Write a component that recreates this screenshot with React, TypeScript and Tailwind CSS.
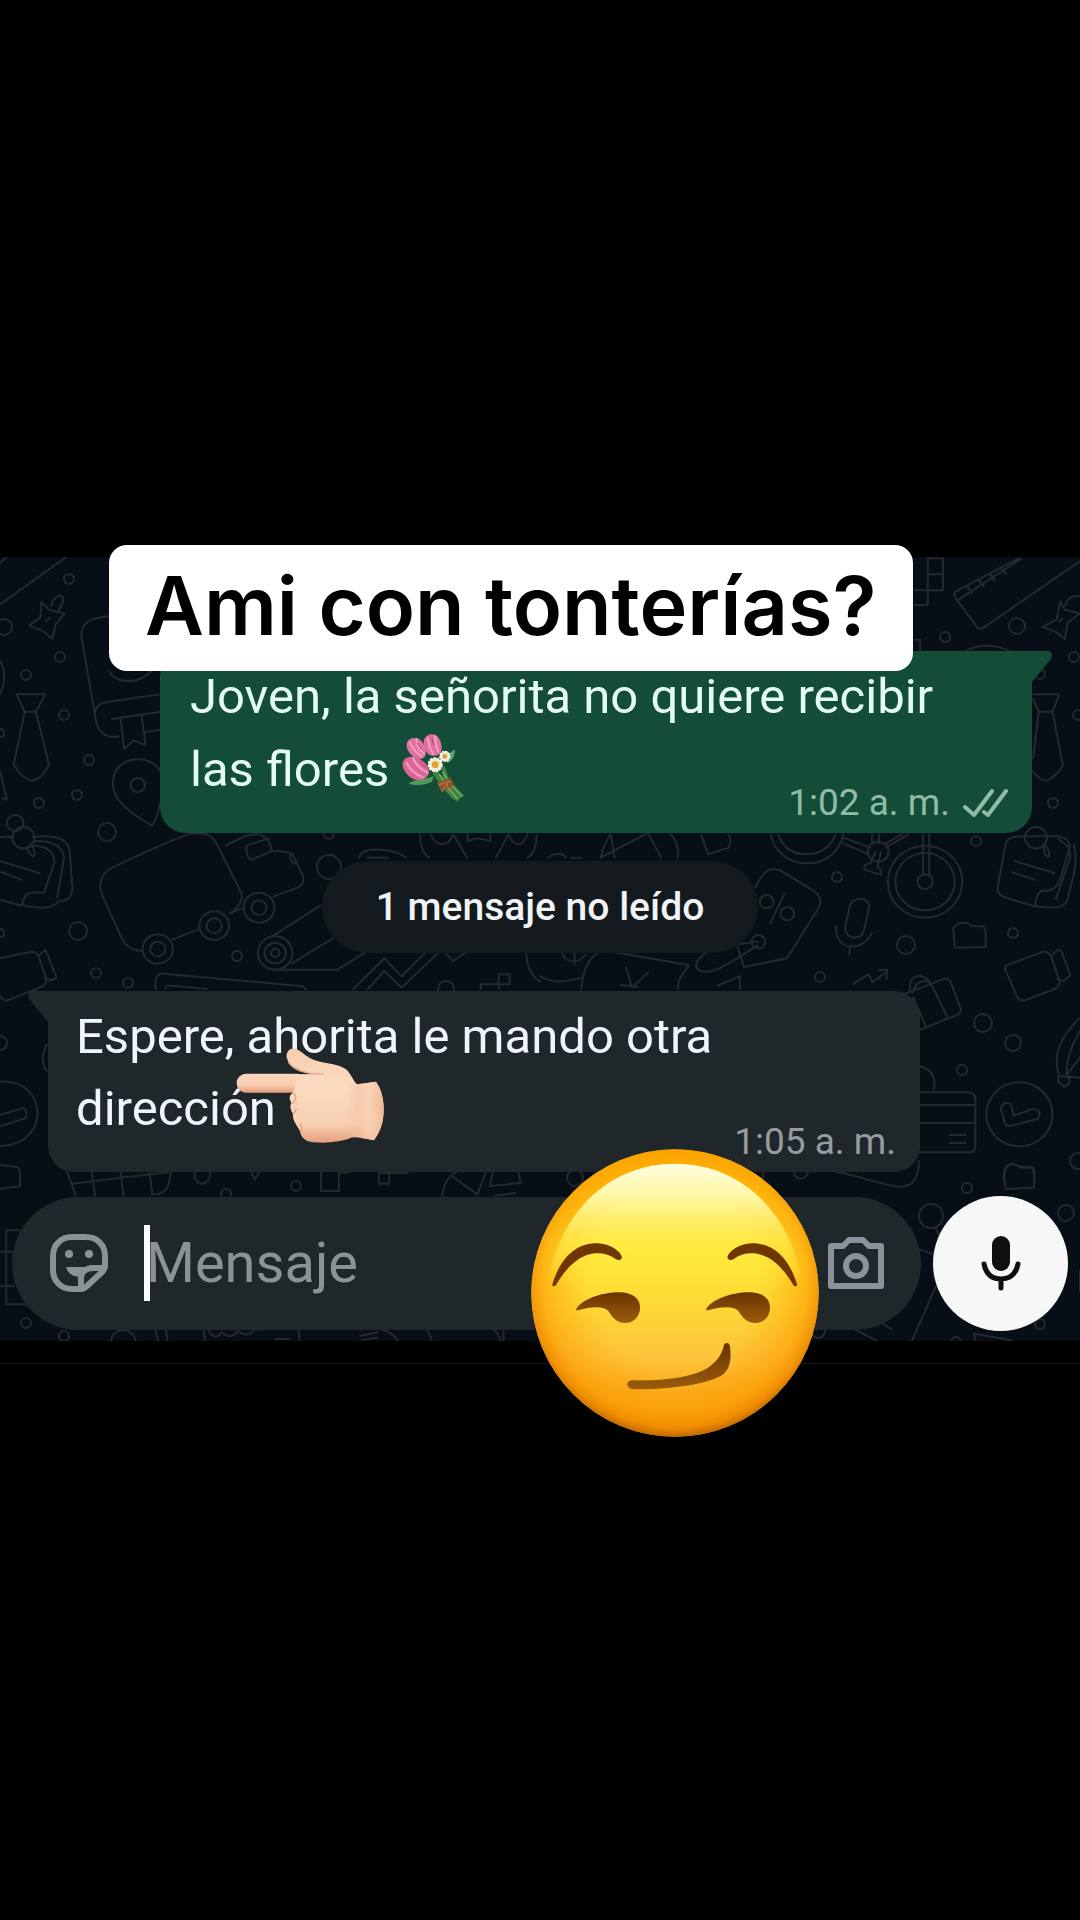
import React from 'react';

interface Dot {
    x: number;
    y: number;
    r: number;
}

// Small loose circles scattered over the wallpaper
const DOTS: Dot[] = [
    { x: 69, y: 578, r: 5 }, { x: 60, y: 656, r: 5 }, { x: 26, y: 674, r: 5 }, { x: 4, y: 626, r: 8 },
    { x: 64, y: 714, r: 5 }, { x: 89, y: 759, r: 5 }, { x: 77, y: 794, r: 5 }, { x: 39, y: 802, r: 5 },
    { x: 107, y: 831, r: 9 }, { x: 0, y: 732, r: 4 }, { x: 329, y: 833, r: 5 }, { x: 329, y: 866, r: 12 },
    { x: 78, y: 930, r: 9 }, { x: 237, y: 955, r: 5 }, { x: 96, y: 972, r: 5 }, { x: 128, y: 982, r: 5 },
    { x: 0, y: 932, r: 4 }, { x: 0, y: 1042, r: 7 }, { x: 446, y: 988, r: 8 }, { x: 945, y: 636, r: 5 },
    { x: 1017, y: 625, r: 8 }, { x: 1074, y: 656, r: 5 }, { x: 1078, y: 714, r: 5 }, { x: 1053, y: 802, r: 5 },
    { x: 1040, y: 673, r: 5 }, { x: 976, y: 840, r: 5 }, { x: 837, y: 876, r: 5 }, { x: 906, y: 944, r: 9 },
    { x: 1013, y: 932, r: 5 }, { x: 820, y: 976, r: 5 }, { x: 983, y: 1022, r: 9 }, { x: 1013, y: 1042, r: 8 },
    { x: 962, y: 1069, r: 5 }, { x: 967, y: 1187, r: 5 }, { x: 931, y: 1215, r: 12 }, { x: 1066, y: 1212, r: 8 },
    { x: 1040, y: 1323, r: 5 }, { x: 296, y: 1185, r: 5 }, { x: 226, y: 1193, r: 5 }, { x: 26, y: 1322, r: 5 },
    { x: 64, y: 1335, r: 5 }, { x: 575, y: 1177, r: 8 }, { x: 818, y: 1330, r: 7 }, { x: 956, y: 1341, r: 5 },
    { x: 1078, y: 1160, r: 8 },
];

const Wallpaper: React.FC = () => (
    <svg
        className="absolute inset-x-0 top-0 h-[784px] w-full bg-[#080e16]"
        viewBox="0 556 1080 784"
        preserveAspectRatio="xMidYMin slice"
        fill="none"
        stroke="#24292f"
        strokeWidth="2"
        strokeLinecap="round"
        strokeLinejoin="round"
        aria-hidden="true"
    >
        {DOTS.map((dot) => (
            <circle key={`${dot.x}-${dot.y}`} cx={dot.x} cy={dot.y} r={dot.r} />
        ))}

        {/* top left: ruler, star, diary, tie, pin */}
        <g transform="translate(0 530) scale(.3444 .3333)" strokeWidth="6">
            <path d="M0 220 190 80M0 96l20-18" />
            <path d="M120 212l22 24 46 12-26 32-10 44-30-26-38-14 34-26zM150 224c0-16 18-34 28-30 10 8 4 26-8 44M134 270l10-8" />
            <path d="M316 256c-56 4-80 20-80 58l40 240c4 40 20 66 60 64l10-2M276 550c-2-24 14-34 40-38l150-22M326 564l140-22M350 562l10 92 28-26 34 14-10-86M418 604l50-8M316 420c20 40 90 40 124 0" />
            <path d="M48 490h84l-28 52H72zM72 542 40 700c10 22 30 44 52 50 22-6 40-24 50-50L104 542" />
            <path d="M466 720c-30-46-100-48-130 0-26 60 10 110 106 164 14-24 20-46 24-72" />
            <circle cx="400" cy="762" r="21" />
            <path d="M0 390c16 26 16 70 0 98M0 720l20 86-12-4" />
        </g>

        {/* top right: blocks, ruler, star, tie */}
        <g transform="translate(540 530) scale(.3444 .3333)" strokeWidth="6">
            <path d="M1088 178h82V82h-44v140h-38M1126 130h44M1088 326h16v36" />
            <path d="M1390 82 1206 182c-6 8-4 16 4 24l60 84c6 4 12 4 18 0l280-200M1216 206l180-122M1242 168l12 18M1276 148l12 18M1308 130l12 18M1340 110l12 18" />
            <path d="M1510 212l14 24 46 12M1510 212l-10 54-40 22 36 14 28 22 8-50 38-28M1526 224c0-16 18-34 40-28M1508 272l8-8" />
            <path d="M1236 362c30-24 90-24 130 0" />
            <path d="M1432 490h70c6 0 4 10 0 16l-14 36h-40l-16-38M1448 542l-16 140M1488 542l30 160c-10 20-28 40-50 48-18-6-28-16-38-30" />
        </g>

        {/* middle left: pouch, truck, bandage, laptop */}
        <g transform="translate(0 830) scale(.3444 .3333)" strokeWidth="6">
            <circle cx="68" cy="20" r="32" />
            <circle cx="44" cy="-24" r="24" />
            <path d="M0 20c20-6 30-4 38 0M96 18c50-6 100-2 106 40l8 110c0 30-10 40-40 44M100 30c50 0 80 10 86 50l-20 120M98 44c40 2 60 20 60 50l-30 90c-10 4-40-8-54 10-8 14-6 20-12 30L0 206M66 222c60 14 90 10 104-12M78 52c6 8 8 20 18 24 8-6 6-20-8-36M0 90l114 36M0 122l62 24" />
            <path d="M326 110c60-30 150-74 220-100 46-8 70 0 86 34l68 140c8 24-6 40-26 62M326 110c-36 20-40 50-30 80l54 124c14 34 34 44 60 46M500 326l74-30M668 246l40-16M656 44c40-20 60-36 90-34 30 4 36 20 44 50l-60 26c-14-8-20-34-10-44l62-20M790 60c40 2 60 0 64 20l26 56c2 20-2 26-16 34l-70 26M842 72c0 12 4 22 14 26" />
            <circle cx="458" cy="354" r="44" />
            <circle cx="458" cy="354" r="22" />
            <circle cx="622" cy="284" r="43" />
            <circle cx="622" cy="284" r="22" />
            <circle cx="752" cy="230" r="45" />
            <circle cx="752" cy="230" r="22" />
            <circle cx="799" cy="366" r="50" />
            <circle cx="799" cy="366" r="31" />
            <circle cx="799" cy="366" r="12" />
            <path d="M790 316l140-92M846 398l124-78M800 416h180l84-54" />
            <path d="M452 474c-4-36 4-50 26-46l400 38 10 8M480 474c0-10 6-12 20-10l100 10" />
            <path d="M1026 474l90-92 50 54 72-74M1068 474l48-54 50 50 110-108M1290 362l26 28 40-28M1396 474v-14h84v-30h-32v44M1528 362c0 40 12 70 40 90" />
            <path d="M1042 80c10-36 100-30 138 0M1066 80h60M1220 10c0 40 10 60 26 70M1250 10c20 40 50 40 66 0M1316 10l40 70M1358 4v26l30-8 36 8V4M1476 10c20 40 40 40 56 0M1476 10l-36 70M1558 10c0 40-10 60-26 70" />
            <path d="M0 382l90-20c14 0 20 6 24 20l20 60c2 14-2 20-14 26L22 508c-10 2-22-8-22-14M112 374l20-18 32 84-14 8-20-6" />
            <path d="M136 640c-16 30-16 60 0 80M0 752c140-10 150 190 0 194M0 852l66-20c10 0 14 20 8 30L0 886" />
        </g>

        {/* middle right: bicycle, price tag, microphone, gift, card, clock */}
        <g transform="translate(540 830) scale(.3444 .3333)" strokeWidth="6">
            <path d="M670 10c20 116 190 116 210 0M692 10c20 80 140 80 166 0M880 20l80 30M874 34l76 34M964 10v30M984 10v28M1070 10l-66 40M1050 10l-50 30M1112 10v122M1130 10v122" />
            <circle cx="982" cy="62" r="30" />
            <path d="M974 62l-14 34c-14 2-22 10-18 20l48 16c4-12-4-20-10-24l10-44" />
            <circle cx="1118" cy="152" r="108" />
            <circle cx="1118" cy="152" r="86" />
            <circle cx="1118" cy="152" r="22" />
            <path d="M626 170c12-30 30-56 52-56l20 4 100 64c16 14 22 30 10 50l-90 150-126 26-18-60M710 188l-42 90M632 332c-80 10-150 16-176 60-10 30 20 36 50 26 40-14 70-40 126-74" />
            <circle cx="658" cy="212" r="20" />
            <circle cx="718" cy="248" r="20" />
            <circle cx="634" cy="332" r="20" />
            <path d="M886 290l14-66c8-30 56-28 56 6l-16 70c-6 30-54 26-54-10zM860 284c-6 80 80 80 104 20M900 350l-2 20" />
            <path d="M910 458l44-28 12 24 42-34M984 418l24-2-2 28" />
            <path d="M1204 350l-4-58 18-16h24l12 10h32l8 14v48zM1352 404l110-42c14 0 20 6 24 20l22 66c2 14-2 20-14 26l-86 34c-12 2-20-4-24-14l-34-80zM1484 374l20-18c6 0 8 2 10 6l26 70-18 18-20-6" />
            <path d="M1074 484c-6-60 40-60 60-28M1084 484c4-30 30-40 50-28M1062 488l114-46c10 0 14 6 18 16l28 76c0 10-4 14-12 18l-106 44M1134 456l48 100M1084 500l38 90" />
            <path d="M1102 706c40 10 50 40 40 78M1102 784h140c16 0 22 8 22 20v140c0 14-6 20-20 20h-142M1102 822h162M1102 876h162M1190 912h46M1190 936h46" />
            <circle cx="1392" cy="850" r="96" />
            <path d="M1340 840c-6-20 16-32 28-18l8 32 54-20c20-2 26 20 14 30l-80 22c-10 0-12-4-14-10z" />
            <path d="M1568 560c-60 60-80 120-60 174M1568 600c-30 50-40 90-40 134M1568 680l-40 54M1568 740l-40-4M1506 734l30 6 2 14-14 14-20-16z" />
            <path d="M1352 40c4-20 20-24 50-24h100c30 4 40 20 34 40l-26 90c-10 26-20 30-40 34-20-6-26 10-34 46l-90-28c-16-8-20-20-16-36zM1504 24c30 20 40 30 34 60l-40 120M1550 40c8 30 6 60 0 90l-20 80c-10 20-30 24-90 16M1378 90l116 36M1372 124l64 22M1460 40c6 26 4 30 16 38 6-10 0-26-10-36" />
            <circle cx="1440" cy="20" r="32" />
            <path d="M176 80c10-40 20-60 30-70M176 80l140-76M206 10l10 70M316 10l36 70M380 10c20 20 22 50 20 70M468 10l20 60 60-20c10-20 6-30-2-40M24 80c20-18 46-14 50 0M90 80h28" />
            <path d="M0 436c40 20 60 20 120 4M120 474c4-50 16-90 50-110M210 362l220 40c8 10-30 20-30 72M250 410l16 56M314 424l-46 46M234 462l50 6M516 464l64-28v38M62 362c10 36 50 36 70 10M100 366v34" />
            <path d="M1348 1050c-4-40 16-56 30-50l20 10h34l4 40" />
        </g>

        {/* below the received message and around the composer */}
        <g transform="translate(0 1160) scale(.3444 .3333)" strokeWidth="6">
            <path d="M0 12l50 6c8 4 8 16 8 28v30L0 84" />
            <path d="M170 0l24 30 26 74M210 68l286-36M266 30l10 74M350 30l8 74M434 30l8 70c30 2 50-10 54-70M566 30c-10 50 50 50 44 0M728 30l12 26 14-26M932 34v56h52V34h30M1100 36v32h30V36zM1130 36h54M1284 104c4-40 20-60 40-70M1310 44l76 56 26-70M1432 30l-10 46 90-10-8-36M1436 104l60-8" />
            <path d="M20 208h40M18 208v222h60M0 272h38M0 376h40" />
            <path d="M322 540c4-44 64-44 72 0M450 504l10 36M482 504l4 36M590 504l6 36M604 504c10 30 30 26 40 10 20 20 40 10 46-6 20 20 40 14 50-4 20 6 30 0 36-2M800 534h40M866 504l4 36M1046 524l50-10M1052 536l44-6M1106 504c20 6 40 20 50 36M1236 504c10 10 14 20 18 36M1430 504c14 10 20 20 24 36M1462 504v36" />
        </g>
        <g transform="translate(540 1160) scale(.3444 .3333)" strokeWidth="6">
            <path d="M648 30v20M736 30c6 30 34 30 44 0M850 30c60 10 120 34 180 46 50 8 70-20 70-76M1348 28c4-16 16-20 28-18l20 8h30l10 12-2 50-80 4c-8-20-6-40-6-56z" />
            <path d="M1104 266l40 14M1148 200l10 20M1150 376l-70 162M910 504l66 34M990 486l30 18M1370 538l-110-20 4 20M1568 330v60" />
        </g>
    </svg>
);

const StickerIcon: React.FC = () => (
    <svg className="h-[58px] w-[58px]" viewBox="0 0 58 58" fill="none" stroke="#8c9194" strokeWidth="6" aria-hidden="true">
        <path d="M22 3H36C47 3 55 11 55 22V32C55 34 54 36 52 38L37 52C35 54 33 55 31 55H22C11 55 3 47 3 36V22C3 11 11 3 22 3Z" />
        <path d="M31 53V44C31 38 36 34 43 34H54" />
        <path d="M16 33H40C37 35 35 38 34 42C26 44 18 41 16 33Z" fill="#8c9194" stroke="none" />
        <circle cx="19" cy="20" r="4" fill="#8c9194" stroke="none" />
        <circle cx="39" cy="20" r="4" fill="#8c9194" stroke="none" />
    </svg>
);

const CameraIcon: React.FC = () => (
    <svg className="h-[52px] w-[58px]" viewBox="0 0 58 52" fill="none" stroke="#8b9299" strokeWidth="6" strokeLinejoin="round" aria-hidden="true">
        <path d="M4 9H16L22 3H36L42 9H54V49H4Z" />
        <circle cx="29" cy="29" r="10" />
    </svg>
);

const MicIcon: React.FC = () => (
    <svg className="h-14 w-10" viewBox="0 0 40 56" fill="none" stroke="#0d0f10" strokeWidth="5" strokeLinecap="round" aria-hidden="true">
        <rect x="11" y="1" width="18" height="35" rx="9" fill="#0d0f10" stroke="none" />
        <path d="M3 29C5 39 11 44 20 44C29 44 35 39 37 29M20 45V53" />
    </svg>
);

const DoubleCheck: React.FC = () => (
    <svg className="h-[30px] w-[46px]" viewBox="0 0 46 30" fill="none" stroke="#90bba7" strokeWidth="4" strokeLinecap="round" strokeLinejoin="round" aria-label="Entregado">
        <path d="M3 19 12 27 30 3" />
        <path d="M22 24 26 27 44 3" />
    </svg>
);

const Bouquet: React.FC = () => (
    <svg className="inline-block h-[70px] w-[65px] align-[-17px]" viewBox="70 36 194 210" role="img" aria-label="Ramo de flores">
        <path d="M92 188C110 174 140 176 168 166L162 182C140 194 112 194 92 188Z" fill="#4f9a5b" />
        <path d="M210 126C222 118 232 106 231 86C216 92 206 106 204 122Z" fill="#5aa463" />
        <path d="M164 156L186 190L222 232L240 242L246 232L260 224L232 196L212 172L202 138L190 134L196 168L176 146Z" fill="#3d8443" />
        <path d="M184 160L206 192L238 234M194 152L216 186L252 226" stroke="#7fae62" strokeWidth="4" fill="none" />
        <path d="M178 184C192 182 208 174 216 168L228 192C218 202 202 208 190 212Z" fill="#8a552c" />
        <path d="M182 192L220 180M192 212L208 190L214 214" stroke="#b0713d" strokeWidth="4" fill="none" />
        <path d="M86 68C92 52 108 48 124 54C140 66 148 88 142 106C134 118 116 116 106 106C94 98 86 84 86 68Z" fill="#e2709f" />
        <path d="M96 64C104 84 116 96 132 106M116 54C116 74 126 90 138 98" stroke="#f2a0bf" strokeWidth="6" fill="none" strokeLinecap="round" />
        <path d="M138 58C142 42 158 36 174 42C188 52 196 76 188 96C176 108 160 106 150 98C140 88 136 74 138 58Z" fill="#e2709f" />
        <path d="M150 52C152 72 158 86 166 98M172 46C172 66 176 80 182 92" stroke="#f2a0bf" strokeWidth="6" fill="none" strokeLinecap="round" />
        <path d="M74 128C76 112 92 104 112 108C136 116 154 134 154 156C148 174 126 182 106 174C88 164 74 146 74 128Z" fill="#dd6597" />
        <path d="M86 126C96 146 112 160 134 168M106 112C114 130 130 146 148 154" stroke="#f29dbd" strokeWidth="7" fill="none" strokeLinecap="round" />
        <path d="M126 122L144 140M118 66L130 84M162 52L168 74" stroke="#b93d70" strokeWidth="3" fill="none" />
        <circle cx="172" cy="131" r="20" fill="#f1ead2" stroke="#ffffff" strokeWidth="5" strokeDasharray="8 3" />
        <circle cx="172" cy="131" r="10" fill="#e0a12c" />
        <circle cx="201" cy="106" r="15" fill="#f1ead2" stroke="#ffffff" strokeWidth="4" strokeDasharray="7 3" />
        <circle cx="201" cy="106" r="7" fill="#dba036" />
    </svg>
);

const PointingHand: React.FC = () => (
    <svg className="absolute left-[236px] top-[490px] h-[97px] w-[148px]" viewBox="48 46 444 290" role="img" aria-label="Mano señalando a la izquierda">
        <defs>
            <linearGradient id="skin" x1="0" y1="0" x2="0" y2="1">
                <stop offset="0" stopColor="#f7ccb0" />
                <stop offset=".4" stopColor="#fbdcc0" />
                <stop offset=".8" stopColor="#f8d0b2" />
                <stop offset="1" stopColor="#e3a07c" />
            </linearGradient>
            <linearGradient id="finger" x1="0" y1="0" x2="0" y2="1">
                <stop offset="0" stopColor="#fbd9c0" />
                <stop offset=".6" stopColor="#f8cbae" />
                <stop offset="1" stopColor="#dd9a78" />
            </linearGradient>
            <linearGradient id="wrist" x1="0" y1="0" x2="1" y2="0">
                <stop offset="0" stopColor="#f3bd9b" stopOpacity="0" />
                <stop offset=".3" stopColor="#f2c0a0" stopOpacity=".5" />
                <stop offset=".6" stopColor="#f9d2b5" stopOpacity=".8" />
                <stop offset="1" stopColor="#f0b994" />
            </linearGradient>
        </defs>
        <path
            fill="url(#skin)"
            d="M218 127L280 127C240 118 208 106 200 78C197 56 214 46 230 52C250 62 262 78 285 85C320 96 355 95 378 112C395 127 400 150 412 157L468 150C484 172 492 205 491 235C490 275 480 300 462 325C435 322 415 314 395 317C370 328 330 334 290 332C260 332 245 322 240 300C236 284 216 270 219 245C210 232 210 222 214 212C206 200 208 188 218 184Z"
        />
        <path fill="url(#wrist)" d="M385 150L412 157L468 150C484 172 492 205 491 235C490 275 480 300 462 325C435 322 415 314 395 317C380 270 376 210 385 150Z" />
        <rect x="50" y="126" width="210" height="57" rx="28" fill="url(#finger)" />
        <path fill="#fbd9be" d="M225 130C250 127 290 127 330 127V190H262C240 190 225 188 218 182C226 170 228 148 225 130Z" />
        <path d="M205 90C222 118 260 127 310 126" stroke="#e9ad8b" strokeWidth="4" fill="none" strokeLinecap="round" />
        <path d="M222 186C232 196 224 208 218 214M219 245C224 242 228 238 228 232M242 300C248 292 246 284 240 276" stroke="#e3a17e" strokeWidth="4" fill="none" strokeLinecap="round" />
    </svg>
);

const SmirkFace: React.FC = () => (
    <svg className="absolute left-[531px] top-[592px] h-72 w-72" viewBox="33 26 864 864" role="img" aria-label="Cara sonriendo con picardía">
        <defs>
            <linearGradient id="face" x1="0" y1="0" x2="0" y2="1">
                <stop offset="0" stopColor="#ffb000" />
                <stop offset=".35" stopColor="#ffe636" />
                <stop offset=".55" stopColor="#fdd835" />
                <stop offset=".72" stopColor="#fdc43c" />
                <stop offset=".88" stopColor="#faaa1a" />
                <stop offset="1" stopColor="#ee9500" />
            </linearGradient>
            <radialGradient id="rim" cx=".5" cy=".46" r=".54">
                <stop offset=".55" stopColor="#ffa200" stopOpacity="0" />
                <stop offset=".85" stopColor="#fc9a00" stopOpacity=".6" />
                <stop offset=".94" stopColor="#f08c00" stopOpacity=".9" />
                <stop offset="1" stopColor="#c06a00" />
            </radialGradient>
            <linearGradient id="shine" x1="0" y1="0" x2="0" y2="1">
                <stop offset="0" stopColor="#fffde0" />
                <stop offset=".25" stopColor="#fffaab" stopOpacity=".95" />
                <stop offset=".6" stopColor="#fff04e" stopOpacity=".6" />
                <stop offset="1" stopColor="#ffe636" stopOpacity="0" />
            </linearGradient>
            <linearGradient id="eye" x1="0" y1="0" x2="0" y2="1">
                <stop offset="0" stopColor="#6b3400" />
                <stop offset="1" stopColor="#9a5c0c" />
            </linearGradient>
        </defs>
        <circle cx="465" cy="458" r="431" fill="url(#face)" />
        <circle cx="465" cy="458" r="431" fill="url(#rim)" />
        <path d="M465 70C660 70 800 210 842 400C790 440 720 470 465 470C210 470 140 440 88 400C130 210 270 70 465 70Z" fill="url(#shine)" />
        <g fill="#6f3600">
            <path d="M97 432C122 350 170 308 232 309C272 311 300 332 306 350C304 360 296 361 288 357C268 342 248 337 225 339C180 344 142 376 108 434C103 440 96 438 97 432Z" />
            <path d="M97 432C122 350 170 308 232 309C272 311 300 332 306 350C304 360 296 361 288 357C268 342 248 337 225 339C180 344 142 376 108 434C103 440 96 438 97 432Z" transform="translate(928 0) scale(-1 1)" />
        </g>
        <g fill="url(#eye)">
            <path d="M170 504C186 480 236 456 302 456C344 458 362 480 360 505C358 530 340 548 315 548C290 548 276 530 266 513C252 496 216 498 174 510C169 511 167 508 170 504Z" />
            <path d="M560 504C576 480 626 456 692 456C734 458 752 480 750 505C748 530 730 548 705 548C680 548 666 530 656 513C642 496 606 498 564 510C559 511 557 508 560 504Z" />
        </g>
        <path fill="url(#eye)" d="M335 720C430 722 515 712 562 684C594 662 606 640 612 614C617 605 628 607 630 618C634 650 632 682 612 700C570 734 430 748 340 747C317 745 317 721 335 720Z" />
    </svg>
);

const App: React.FC = () => {
    return (
        <main className="flex min-h-screen flex-col justify-center bg-black font-['Roboto',sans-serif]">
            <section className="relative border-b border-[#141414] pb-8">
                <Wallpaper />

                <div className="relative flex flex-col pt-[94px]">
                    {/* Message envoyé */}
                    <article className="relative ml-40 mr-12 grid rounded-[26px] rounded-tr-none bg-[#144d37] pl-[30px] pr-6">
                        <svg className="absolute left-full top-0 -ml-px h-8 w-[22px]" viewBox="0 0 22 32" fill="#144d37" aria-hidden="true">
                            <path d="M0 0H17C21 0 22 4 20 8L0 32Z" />
                        </svg>
                        <p className="col-start-1 row-start-1 pb-[27px] pt-[10px] text-[49px] leading-[72px] text-[#e4fdf0]">
                            Joven, la señorita no quiere recibir
                            <br />
                            las flores <Bouquet />
                        </p>
                        <div className="col-start-1 row-start-1 flex items-center gap-3 self-end justify-self-end pb-2 text-[37px] leading-[44px] text-[#90bba7]">
                            <time>1:02 a. m.</time>
                            <DoubleCheck />
                        </div>
                    </article>

                    <div className="mt-7 self-center rounded-full bg-[#13191c] px-[54px] py-6 text-[39px] font-medium leading-[44px] text-[#f1f4f6]">
                        1 mensaje no leído
                    </div>

                    {/* Message reçu */}
                    <article className="relative ml-12 mr-40 mt-[38px] grid rounded-[26px] rounded-tl-none bg-[#20272a] pl-7 pr-6">
                        <svg className="absolute right-full top-0 -mr-px h-8 w-[22px]" viewBox="0 0 22 32" fill="#20272a" aria-hidden="true">
                            <path d="M22 0H5C1 0 0 4 2 8L22 32Z" />
                        </svg>
                        <p className="col-start-1 row-start-1 pb-[27px] pt-[10px] text-[49px] leading-[72px] text-[#f1f4fa]">
                            Espere, ahorita le mando otra
                            <br />
                            dirección
                        </p>
                        <time className="col-start-1 row-start-1 self-end justify-self-end pb-2 text-[37px] leading-[44px] text-[#969b9f]">
                            1:05 a. m.
                        </time>
                    </article>

                    <form className="mt-6 flex items-center gap-3 pl-3 pr-3" onSubmit={(e) => e.preventDefault()}>
                        <div className="flex h-[133px] min-w-0 flex-1 items-center rounded-full bg-[#20272a] pl-[38px] pr-9">
                            <button type="button" aria-label="Stickers">
                                <StickerIcon />
                            </button>
                            <span className="ml-9 h-[76px] w-[6px] shrink-0 bg-white" />
                            <input
                                type="text"
                                aria-label="Mensaje"
                                placeholder="Mensaje"
                                className="-ml-1 min-w-0 flex-1 bg-transparent text-[56px] leading-[72px] text-white outline-none placeholder:text-[#8c9194]"
                            />
                            <button type="button" aria-label="Cámara">
                                <CameraIcon />
                            </button>
                        </div>
                        <button type="button" aria-label="Grabar audio" className="flex h-[135px] w-[135px] shrink-0 items-center justify-center rounded-full bg-[#f7f7f7]">
                            <MicIcon />
                        </button>
                    </form>
                </div>

                {/* Légende et emojis posés sur la capture */}
                <h1 className="absolute left-[109px] -top-3 whitespace-nowrap rounded-[18px] bg-white px-9 pb-[14px] pt-[10px] font-['Inter',sans-serif] text-[81px] font-semibold leading-[102px] text-black">
                    Ami con tonterías?
                </h1>
                <PointingHand />
                <SmirkFace />
            </section>
        </main>
    );
};

export default App;
